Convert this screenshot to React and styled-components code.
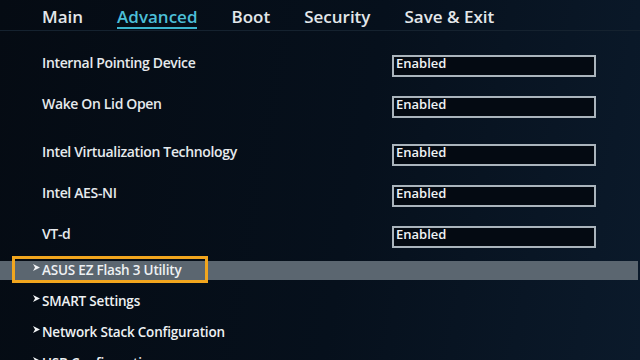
import React from "react";
import styled, { createGlobalStyle } from "styled-components";

const GlobalStyle = createGlobalStyle`
    html, body {
        margin: 0;
        padding: 0;
        background: #050b13;
    }
    * {
        box-sizing: border-box;
    }
`;

const Screen = styled.div`
    width: 640px;
    height: 360px;
    overflow: hidden;
    background: linear-gradient(100deg, #050b13 0%, #06101c 55%, #0b1a2b 100%);
    font-family: "Open Sans", "Noto Sans", sans-serif;
    color: #e6eaed;
`;

const TabBar = styled.div`
    display: flex;
    gap: 34px;
    height: 31px;
    padding-left: 42px;
    border-bottom: 1px solid #15222f;
`;

const Tab = styled.div`
    font-size: 17px;
    font-weight: 600;
    line-height: 22px;
    padding-top: 6px;
    height: 29px;
    color: ${props => (props.active ? "#4cbfd8" : "#e3e7ea")};
    border-bottom: 2px solid ${props => (props.active ? "#3cb6cf" : "transparent")};
`;

const Settings = styled.div`
    display: flex;
    flex-direction: column;
    padding-top: 22px;
`;

const Row = styled.div`
    display: flex;
    align-items: baseline;
    height: 22px;
    margin-top: ${props => props.gap || 0}px;
    padding-left: 42px;
`;

const Label = styled.div`
    width: 350px;
    font-size: 14px;
    font-weight: 600;
    letter-spacing: -0.35px;
`;

const ValueBox = styled.div`
    display: flex;
    align-items: baseline;
    width: 204px;
    height: 22px;
    padding-left: 2px;
    border: 2px solid #aab4bc;
    background: #040a12;
    font-size: 13px;
    font-weight: 600;
    line-height: 12px;
    color: #f1f3f5;
`;

const Menu = styled.div`
    display: flex;
    flex-direction: column;
    gap: 12px;
    margin-top: 15px;
`;

const MenuItem = styled.div`
    position: relative;
    display: flex;
    align-items: flex-start;
    height: 19px;
    margin-right: 2px;
    padding-left: 33px;
    background: ${props => (props.selected ? "#5b6670" : "transparent")};
    font-size: 13.5px;
    font-weight: 600;
    letter-spacing: -0.2px;
    line-height: 19px;
    color: #eef1f3;
`;

const Arrow = styled.svg`
    flex: none;
    width: 7px;
    height: 7px;
    margin-top: 3px;
    margin-right: 2px;
`;

const FocusFrame = styled.div`
    position: absolute;
    left: 12px;
    top: -5px;
    width: 196px;
    height: 27px;
    border: 3px solid #f2a61e;
    pointer-events: none;
`;

const tabs = ["Main", "Advanced", "Boot", "Security", "Save & Exit"];

const settings = [
    { label: "Internal Pointing Device", value: "Enabled", gap: 0 },
    { label: "Wake On Lid Open", value: "Enabled", gap: 19 },
    { label: "Intel Virtualization Technology", value: "Enabled", gap: 26 },
    { label: "Intel AES-NI", value: "Enabled", gap: 19 },
    { label: "VT-d", value: "Enabled", gap: 19 },
];

const menu = [
    "ASUS EZ Flash 3 Utility",
    "SMART Settings",
    "Network Stack Configuration",
    "USB Configuration",
];

function SubArrow() {
    return (
        <Arrow viewBox="0 0 7 7">
            <path d="M0 0 L7 3.5 L0 7 L2 3.5 Z" fill="#f2f4f6" />
        </Arrow>
    );
}

export default function App() {
    return (
        <Screen>
            <GlobalStyle />
            <TabBar>
                {tabs.map(t => (
                    <Tab key={t} active={t === "Advanced"}>{t}</Tab>
                ))}
            </TabBar>
            <Settings>
                {settings.map(s => (
                    <Row key={s.label} gap={s.gap}>
                        <Label>{s.label}</Label>
                        <ValueBox>{s.value}</ValueBox>
                    </Row>
                ))}
                <Menu>
                    {menu.map((m, i) => (
                        <MenuItem key={m} selected={i === 0}>
                            <SubArrow />
                            {m}
                            {i === 0 && <FocusFrame />}
                        </MenuItem>
                    ))}
                </Menu>
            </Settings>
        </Screen>
    );
}
